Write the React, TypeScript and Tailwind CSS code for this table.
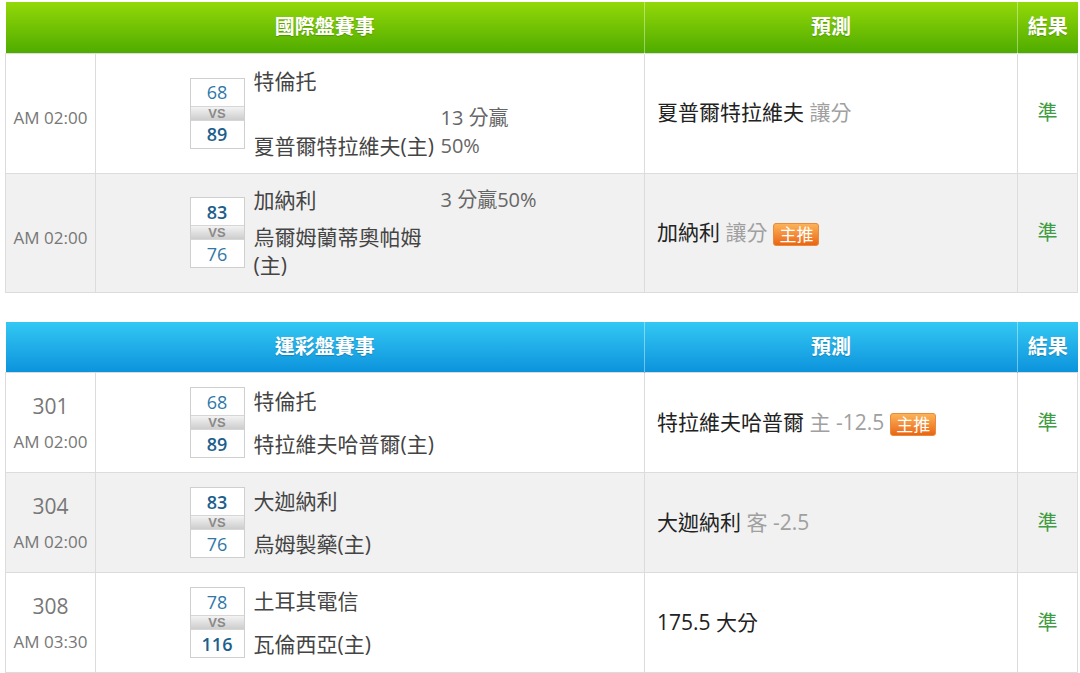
import React from "react";

type Score = { a: number; b: number; win: "a" | "b" };

function ScoreBox({ s }: { s: Score }) {
  const num = "h-[27px] flex items-center justify-center text-[18px] leading-none";
  return (
    <div className="w-[55px] shrink-0 border border-[#cfcfcf] bg-white flex flex-col">
      <div className={`${num} ${s.win === "a" ? "font-semibold text-[#1d5f8c]" : "text-[#2f78a8]"}`}>{s.a}</div>
      <div className="h-[15px] bg-linear-to-b from-[#f3f3f3] to-[#cdcdcd] text-[13px] leading-[13px] font-bold text-[#8a8a8a] text-center border-y border-[#d6d6d6] font-['Liberation_Sans',sans-serif]">
        VS
      </div>
      <div className={`${num} ${s.win === "b" ? "font-semibold text-[#1d5f8c]" : "text-[#2f78a8]"}`}>{s.b}</div>
    </div>
  );
}

function Badge() {
  return (
    <span className="inline-block ml-[6px] px-[5px] h-[23px] leading-[21px] text-[17px] rounded-[3px] bg-linear-to-b from-[#fbb256] to-[#e9650f] text-white border border-[#e98b3a] align-middle">
      主推
    </span>
  );
}

function Pred({ main, sub, badge }: { main: string; sub?: string; badge?: boolean }) {
  return (
    <td className="border border-[#dcdcdc] pl-[12px] text-[21px] text-[#222]">
      <span>{main}</span>
      {sub && <span className="text-[#a0a0a0]"> {sub}</span>}
      {badge && <Badge />}
    </td>
  );
}

function Result() {
  return <td className="border border-[#dcdcdc] text-center text-[20px] text-[#3f9c42]">準</td>;
}

function HeaderRow({ title, kind }: { title: string; kind: "green" | "blue" }) {
  const bg =
    kind === "green"
      ? "bg-linear-to-b from-[#93d80a] to-[#4eac00]"
      : "bg-linear-to-b from-[#33c8f3] to-[#0a92dc]";
  const th = "text-white text-[20px] font-bold [text-shadow:0_1px_1px_rgba(0,0,0,0.2)] text-center";
  return (
    <tr className={`h-[51px] ${bg}`}>
      <th colSpan={2} className={`${th} border-r border-white/40`}>{title}</th>
      <th className={`${th} border-r border-white/40`}>預測</th>
      <th className={th}>結果</th>
    </tr>
  );
}

function Cols() {
  return (
    <colgroup>
      <col className="w-[90px]" />
      <col className="w-[549px]" />
      <col className="w-[373px]" />
      <col className="w-[60px]" />
    </colgroup>
  );
}

function Names2({ t1, t2 }: { t1: string; t2: string }) {
  return (
    <div className="w-[297px] h-[71px] flex flex-col justify-between text-[21px] leading-[28px] text-[#444]">
      <div>{t1}</div>
      <div>{t2}</div>
    </div>
  );
}

function Match({ s, children }: { s: Score; children: React.ReactNode }) {
  return (
    <td className="border border-[#dcdcdc]">
      <div className="w-[361px] mx-auto flex items-center gap-[9px]">
        <ScoreBox s={s} />
        {children}
      </div>
    </td>
  );
}

function Time1() {
  return <td className="border border-[#dcdcdc] text-center text-[17px] text-[#777] pt-[10px]">AM 02:00</td>;
}

function Time2({ n, t }: { n: string; t: string }) {
  return (
    <td className="border border-[#dcdcdc] text-center text-[#777]">
      <div className="flex flex-col items-center gap-[10px]">
        <div className="text-[21px] leading-[28px]">{n}</div>
        <div className="text-[17px] leading-[24px]">{t}</div>
      </div>
    </td>
  );
}

export default function App() {
  return (
    <div className="bg-white w-[1080px] h-[673px] overflow-hidden pl-[5px] pt-[2px] font-['Open_Sans','Noto_Sans_CJK_TC',sans-serif]">
      <table className="w-[1072px] table-fixed border-collapse">
        <Cols />
        <thead>
          <HeaderRow title="國際盤賽事" kind="green" />
        </thead>
        <tbody>
          <tr className="h-[120px] bg-white">
            <Time1 />
            <Match s={{ a: 68, b: 89, win: "b" }}>
              <div className="grid grid-cols-[183px_107px] gap-x-[4px] gap-y-[9px] text-[21px] leading-[28px]">
                <div className="text-[#444]">特倫托</div>
                <div />
                <div className="text-[#444] self-end whitespace-nowrap">夏普爾特拉維夫(主)</div>
                <div className="text-[#666] text-[20px]">
                  13 分贏
                  <br />
                  50%
                </div>
              </div>
            </Match>
            <Pred main="夏普爾特拉維夫" sub="讓分" />
            <Result />
          </tr>
          <tr className="h-[119px] bg-[#f1f1f1]">
            <Time1 />
            <Match s={{ a: 83, b: 76, win: "a" }}>
              <div className="grid grid-cols-[183px_107px] gap-x-[4px] gap-y-[9px] text-[21px] leading-[28px]">
                <div className="text-[#444]">加納利</div>
                <div className="text-[#666] text-[20px] whitespace-nowrap">3 分贏50%</div>
                <div className="text-[#444]">
                  烏爾姆蘭蒂奧帕姆
                  <br />
                  (主)
                </div>
                <div />
              </div>
            </Match>
            <Pred main="加納利" sub="讓分" badge />
            <Result />
          </tr>
        </tbody>
      </table>

      <div className="h-[29px]" />

      <table className="w-[1072px] table-fixed border-collapse">
        <Cols />
        <thead>
          <HeaderRow title="運彩盤賽事" kind="blue" />
        </thead>
        <tbody>
          <tr className="h-[100px] bg-white">
            <Time2 n="301" t="AM 02:00" />
            <Match s={{ a: 68, b: 89, win: "b" }}>
              <Names2 t1="特倫托" t2="特拉維夫哈普爾(主)" />
            </Match>
            <Pred main="特拉維夫哈普爾" sub="主 -12.5" badge />
            <Result />
          </tr>
          <tr className="h-[100px] bg-[#f1f1f1]">
            <Time2 n="304" t="AM 02:00" />
            <Match s={{ a: 83, b: 76, win: "a" }}>
              <Names2 t1="大迦納利" t2="烏姆製藥(主)" />
            </Match>
            <Pred main="大迦納利" sub="客 -2.5" />
            <Result />
          </tr>
          <tr className="h-[100px] bg-white">
            <Time2 n="308" t="AM 03:30" />
            <Match s={{ a: 78, b: 116, win: "b" }}>
              <Names2 t1="土耳其電信" t2="瓦倫西亞(主)" />
            </Match>
            <Pred main="175.5 大分" />
            <Result />
          </tr>
        </tbody>
      </table>
    </div>
  );
}
